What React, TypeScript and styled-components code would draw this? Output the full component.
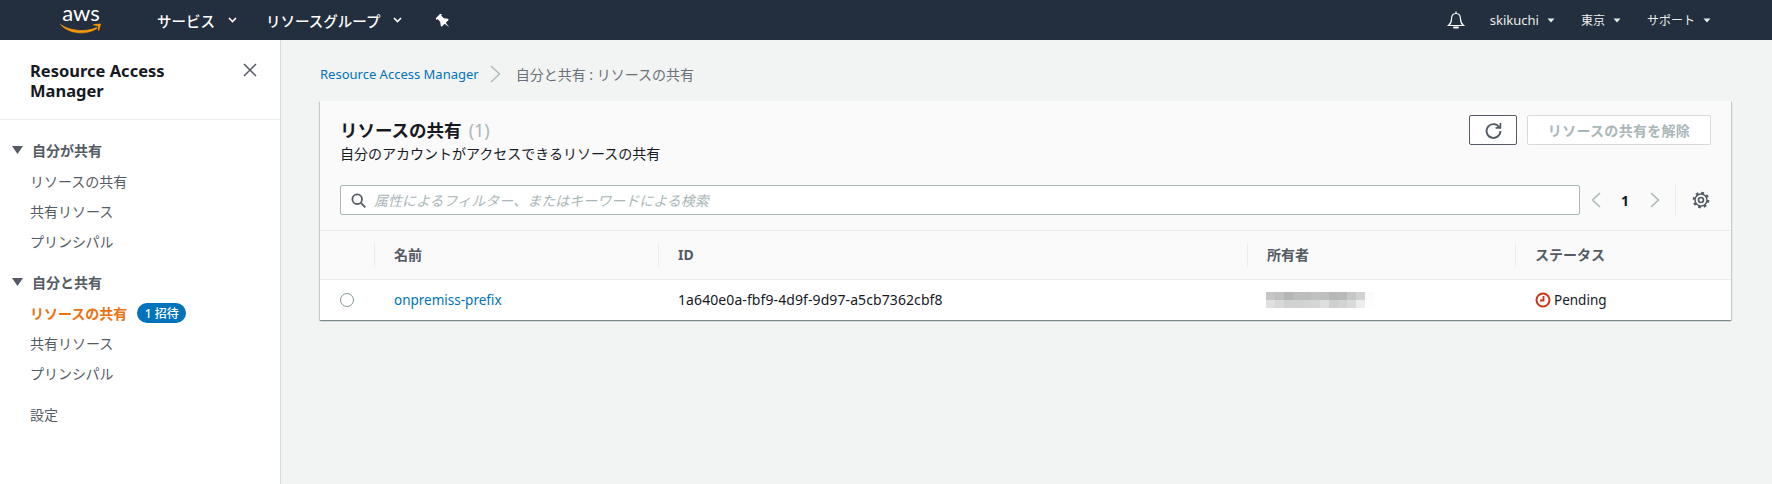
import React from "react";
import styled, { createGlobalStyle } from "styled-components";

const FONT = `"Noto Sans", "Noto Sans CJK JP", sans-serif`;

const Global = createGlobalStyle`
  html, body { margin: 0; padding: 0; background: #f2f3f3; height: 100%; }
  body { font-family: ${FONT}; font-size: 14px; color: #16191f; overflow: hidden; }
  * { box-sizing: border-box; }
`;

const Page = styled.div`
  width: 1772px;
  height: 484px;
  display: flex;
  flex-direction: column;
`;

const TopBar = styled.header`
  height: 40px;
  flex: none;
  background: #232f3e;
  color: #fff;
  display: flex;
  align-items: center;
  padding: 0 0 0 60px;
`;

const LogoBox = styled.div`
  width: 42px;
  height: 32px;
  display: flex;
  flex-direction: column;
  align-items: center;
  margin-right: 55px;
  margin-top: -2px;
`;

const LogoWord = styled.span`
  font-family: Lato, sans-serif;
  font-size: 22px;
  line-height: 19px;
  height: 19px;
  color: #fff;
`;

const NavMenu = styled.span<{ $right?: number }>`
  display: inline-flex;
  align-items: center;
  font-size: 14.5px;
  font-weight: 500;
  color: #fff;
  gap: 13px;
  margin-right: ${(p) => p.$right ?? 29}px;
  white-space: nowrap;
`;

const PinWrap = styled.span`
  display: flex;
  margin-top: 3px;
`;

const UserMenu = styled.span<{ $right?: number; $size?: number }>`
  display: inline-flex;
  align-items: center;
  font-size: ${(p) => p.$size ?? 12}px;
  color: #eaeded;
  gap: 8px;
  margin-right: ${(p) => p.$right ?? 0}px;
  white-space: nowrap;
`;

const Spacer = styled.div`
  flex: 1;
`;

const BellWrap = styled.span`
  display: flex;
  margin-right: 24px;
`;

const Body = styled.div`
  flex: 1;
  display: flex;
  min-height: 0;
`;

const Sidebar = styled.aside`
  width: 281px;
  flex: none;
  background: #fff;
  border-right: 1px solid #d5dbdb;
`;

const SideHead = styled.div`
  height: 80px;
  padding: 21px 22px 0 30px;
  border-bottom: 1px solid #eaeded;
  display: flex;
  justify-content: space-between;
  align-items: flex-start;
`;

const SideTitle = styled.div`
  font-size: 16.5px;
  font-weight: 700;
  line-height: 20px;
  width: 180px;
`;

const CloseBtn = styled.span`
  display: flex;
  margin-top: 1px;
  color: #545b64;
`;

const SideNav = styled.nav`
  padding-top: 14px;
`;

const SectionHead = styled.div`
  display: flex;
  align-items: center;
  height: 32px;
  padding-left: 12px;
  gap: 9px;
  font-weight: 700;
  font-size: 14px;
  color: #545b64;
`;

const NavGroup = styled.div`
  margin-bottom: 10px;
`;

const NavItem = styled.div<{ $active?: boolean }>`
  display: flex;
  align-items: center;
  height: 30px;
  padding-left: 30px;
  font-size: 14px;
  font-weight: ${(p) => (p.$active ? 700 : 400)};
  color: ${(p) => (p.$active ? "#ec7211" : "#545b64")};
`;

const Badge = styled.span`
  margin-left: 10px;
  height: 20px;
  width: 49px;
  border-radius: 10px;
  background: #0073bb;
  color: #fff;
  font-size: 12px;
  font-weight: 500;
  display: inline-flex;
  align-items: center;
  justify-content: center;
  gap: 4px;
`;

const SoloItem = styled(NavItem)`
  margin-top: 11px;
`;

const Main = styled.main`
  flex: 1;
  padding: 23px 41px 0 39px;
`;

const Crumbs = styled.div`
  display: flex;
  align-items: center;
  height: 22px;
  gap: 11px;
  margin-bottom: 16px;
  color: #687078;
`;

const CrumbLink = styled.a`
  font-size: 13px;
  color: #0073bb;
`;

const CrumbCurrent = styled.span`
  font-size: 14px;
  margin-left: 4px;
`;

const Card = styled.section`
  background: #fff;
  box-shadow: 0 1px 1px 0 rgba(0, 28, 36, 0.3), 1px 1px 1px 0 rgba(0, 28, 36, 0.15), -1px 1px 1px 0 rgba(0, 28, 36, 0.15);
`;

const CardTop = styled.div`
  background: #fafafa;
  height: 130px;
  padding: 14px 20px 0 20px;
  border-bottom: 1px solid #eaeded;
`;

const TitleRow = styled.div`
  display: flex;
  justify-content: space-between;
  align-items: flex-start;
  height: 70px;
`;

const TitleText = styled.div`
  padding-top: 2px;
`;

const CardTitle = styled.h2`
  margin: 0;
  font-size: 17.5px;
  line-height: 26px;
  font-weight: 700;
  color: #16191f;
`;

const Count = styled.span`
  font-weight: 400;
  font-size: 18px;
  color: #aab7b8;
  margin-left: 7px;
`;

const CardDesc = styled.div`
  font-size: 14px;
  line-height: 20px;
  color: #16191f;
  margin-top: 1px;
`;

const Actions = styled.div`
  display: flex;
  gap: 10px;
`;

const IconButton = styled.button`
  width: 48px;
  height: 30px;
  margin: 0;
  padding: 0;
  background: #fff;
  border: 1px solid #545b64;
  border-radius: 2px;
  color: #545b64;
  display: flex;
  align-items: center;
  justify-content: center;
`;

const DisabledButton = styled.button`
  width: 184px;
  height: 30px;
  padding: 0;
  background: #fff;
  border: 1px solid #d5dbdb;
  border-radius: 2px;
  color: #aab7b8;
  font-family: ${FONT};
  font-weight: 700;
  font-size: 14px;
  letter-spacing: 0.3px;
`;

const FilterRow = styled.div`
  display: flex;
  align-items: center;
`;

const SearchBox = styled.div`
  width: 1240px;
  height: 30px;
  background: #fff;
  border: 1px solid #aab7b8;
  border-radius: 2px;
  display: flex;
  align-items: center;
  padding-left: 10px;
  gap: 8px;
  color: #545b64;
`;

const Placeholder = styled.span`
  font-style: italic;
  font-size: 14px;
  color: #aab7b8;
`;

const Pager = styled.div`
  display: flex;
  align-items: center;
  margin-left: 10px;
  height: 30px;
`;

const PagerArrow = styled.span`
  display: flex;
  width: 11px;
  justify-content: center;
  color: #aab7b8;
`;

const PageNum = styled.span`
  font-size: 14px;
  font-weight: 700;
  width: 48px;
  text-align: center;
`;

const PagerDivider = styled.span`
  width: 1px;
  height: 30px;
  background: #eaeded;
  margin: 0 16px 0 15px;
`;

const GearWrap = styled.span`
  display: flex;
  color: #545b64;
`;

const Table = styled.div`
  display: grid;
  grid-template-columns: 54px 284px 589px 268px 1fr;
`;

const HeadCell = styled.div<{ $sep?: boolean }>`
  height: 49px;
  background: #fafafa;
  border-bottom: 1px solid #eaeded;
  display: flex;
  align-items: center;
  padding: 0 0 2px 20px;
  font-weight: 700;
  font-size: 14px;
  color: #545b64;
  position: relative;

  &::before {
    content: "";
    display: ${(p) => (p.$sep ? "block" : "none")};
    position: absolute;
    left: 0;
    top: 12px;
    height: 24px;
    width: 1px;
    background: #eaeded;
  }
`;

const Cell = styled.div`
  height: 40px;
  display: flex;
  align-items: center;
  padding-left: 20px;
  font-size: 14px;
  color: #16191f;
`;

const Radio = styled.span`
  width: 14px;
  height: 14px;
  border: 1px solid #879596;
  border-radius: 50%;
  background: #fff;
`;

const RowLink = styled.a`
  color: #0073bb;
  font-size: 13.5px;
`;

const IdText = styled.span`
  letter-spacing: 0.09px;
  margin-top: -1px;
`;

const Mosaic = styled.div`
  display: grid;
  grid-template-columns: repeat(12, 9px);
  grid-auto-rows: 8px;
  margin-left: -1px;
`;

const StatusWrap = styled.span`
  display: inline-flex;
  align-items: center;
  gap: 3px;
  font-size: 13.5px;
`;

const Caret = () => (
  <svg width="9" height="6" viewBox="0 0 9 6">
    <path d="M1 1l3.5 3.5L8 1" fill="none" stroke="currentColor" strokeWidth="1.6" />
  </svg>
);

const SmallCaret = () => (
  <svg width="8" height="5" viewBox="0 0 8 5">
    <path d="M0.5 0.5h7L4 4.5z" fill="currentColor" />
  </svg>
);

const Triangle = () => (
  <svg width="11" height="8" viewBox="0 0 11 8">
    <path d="M0 0h11L5.5 8z" fill="#545b64" />
  </svg>
);

const shades = [
  "#c4c6c6", "#bfc1c1", "#b4b6b6", "#bbbdbd", "#bbbdbd", "#bfc1c1", "#bdbfbf", "#b6b8b8", "#b8baba", "#c6c8c8", "#d0d2d2", "#fbfbfb",
  "#e0e0e0", "#d8d8d8", "#cfd1d1", "#d0d2d2", "#d2d4d4", "#d4d6d6", "#dedede", "#cdcfcf", "#d2d4d4", "#d8dada", "#ececec", "#fdfdfd",
];

export default function App() {
  return (
    <Page>
      <Global />
      <TopBar>
        <LogoBox>
          <LogoWord>aws</LogoWord>
          <svg width="42" height="13" viewBox="0 0 42 13">
            <path d="M0.5 2.500C9 8.500 25 11 36.500 5.500L37 6.500C26 13.500 9 12 0.500 2.500z" fill="#f90" stroke="#f90" strokeWidth="0.6" strokeLinejoin="round" />
            <path d="M33.500 2.800l7-.8-1.800 6.500-.6-4.700z" fill="#f90" stroke="#f90" strokeWidth="0.8" strokeLinejoin="round" />
          </svg>
        </LogoBox>
        <NavMenu>サービス <Caret /></NavMenu>
        <NavMenu $right={34}>リソースグループ <Caret /></NavMenu>
        <PinWrap>
          <svg width="16" height="16" viewBox="-8 -8 16 16">
            <g transform="rotate(-45) translate(0 -1)">
              <path d="M-3.800 -7.500H3.800V-5.700H2.600V-1.800L5 1.500V2.700H0.800L0 8.500-0.800 2.700H-5V1.500L-2.600 -1.800V-5.700H-3.800z" fill="#fff" />
            </g>
          </svg>
        </PinWrap>
        <Spacer />
        <BellWrap>
          <svg width="20" height="20" viewBox="0 0 20 20" fill="none" stroke="#fff" strokeWidth="1.2">
            <path d="M2.500 15.500c2-1.500 3-3 3-6.500 0-3.500 2-5.500 4.500-5.500s4.500 2 4.500 5.500c0 3.500 1 5 3 6.500z" />
            <path d="M10 1.500v2" />
            <path d="M8 17.500h4" strokeWidth="1.800" strokeLinecap="round" />
          </svg>
        </BellWrap>
        <UserMenu $right={26} $size={13}>skikuchi <SmallCaret /></UserMenu>
        <UserMenu $right={26}>東京 <SmallCaret /></UserMenu>
        <UserMenu $right={61}>サポート <SmallCaret /></UserMenu>
      </TopBar>
      <Body>
        <Sidebar>
          <SideHead>
            <SideTitle>Resource Access Manager</SideTitle>
            <CloseBtn>
              <svg width="16" height="16" viewBox="0 0 16 16">
                <path d="M2 2l12 12M14 2L2 14" stroke="currentColor" strokeWidth="1.500" fill="none" />
              </svg>
            </CloseBtn>
          </SideHead>
          <SideNav>
            <NavGroup>
              <SectionHead><Triangle />自分が共有</SectionHead>
              <NavItem>リソースの共有</NavItem>
              <NavItem>共有リソース</NavItem>
              <NavItem>プリンシパル</NavItem>
            </NavGroup>
            <NavGroup>
              <SectionHead><Triangle />自分と共有</SectionHead>
              <NavItem $active>リソースの共有<Badge>1 招待</Badge></NavItem>
              <NavItem>共有リソース</NavItem>
              <NavItem>プリンシパル</NavItem>
            </NavGroup>
            <SoloItem>設定</SoloItem>
          </SideNav>
        </Sidebar>
        <Main>
          <Crumbs>
            <CrumbLink>Resource Access Manager</CrumbLink>
            <svg width="11" height="18" viewBox="0 0 11 18">
              <path d="M1 1l8.500 8L1 17" fill="none" stroke="#aab7b8" strokeWidth="1.300" />
            </svg>
            <CrumbCurrent>自分と共有 : リソースの共有</CrumbCurrent>
          </Crumbs>
          <Card>
            <CardTop>
              <TitleRow>
                <TitleText>
                  <CardTitle>リソースの共有<Count>(1)</Count></CardTitle>
                  <CardDesc>自分のアカウントがアクセスできるリソースの共有</CardDesc>
                </TitleText>
                <Actions>
                  <IconButton aria-label="refresh">
                    <svg width="17" height="17" viewBox="0 0 16 16" fill="none" stroke="currentColor" strokeWidth="1.800">
                      <path d="M13.500 5A6.500 6.500 0 1 0 14.500 8.500" />
                      <path d="M14.500 1v4.500H10" strokeWidth="1.600" />
                    </svg>
                  </IconButton>
                  <DisabledButton disabled>リソースの共有を解除</DisabledButton>
                </Actions>
              </TitleRow>
              <FilterRow>
                <SearchBox>
                  <svg width="15" height="15" viewBox="0 0 15 15" fill="none" stroke="currentColor" strokeWidth="1.800">
                    <circle cx="6.200" cy="6.200" r="4.800" />
                    <path d="M9.800 9.800l4.500 4.500" />
                  </svg>
                  <Placeholder>属性によるフィルター、またはキーワードによる検索</Placeholder>
                </SearchBox>
                <Pager>
                  <PagerArrow>
                    <svg width="10" height="16" viewBox="0 0 10 16"><path d="M9 1L1.500 8 9 15" fill="none" stroke="currentColor" strokeWidth="1.500" /></svg>
                  </PagerArrow>
                  <PageNum>1</PageNum>
                  <PagerArrow>
                    <svg width="10" height="16" viewBox="0 0 10 16"><path d="M1 1l7.500 7L1 15" fill="none" stroke="currentColor" strokeWidth="1.500" /></svg>
                  </PagerArrow>
                  <PagerDivider />
                  <GearWrap>
                    <svg width="18" height="18" viewBox="0 0 16 16" fill="none" stroke="currentColor">
                      <circle cx="8" cy="8" r="2.200" strokeWidth="1.500" />
                      <circle cx="8" cy="8" r="6.400" strokeWidth="2" strokeDasharray="2.400 2.630" />
                      <circle cx="8" cy="8" r="5.300" strokeWidth="1.300" />
                    </svg>
                  </GearWrap>
                </Pager>
              </FilterRow>
            </CardTop>
            <Table>
              <HeadCell />
              <HeadCell $sep>名前</HeadCell>
              <HeadCell $sep>ID</HeadCell>
              <HeadCell $sep>所有者</HeadCell>
              <HeadCell $sep>ステータス</HeadCell>
              <Cell><Radio /></Cell>
              <Cell><RowLink>onpremiss-prefix</RowLink></Cell>
              <Cell><IdText>1a640e0a-fbf9-4d9f-9d97-a5cb7362cbf8</IdText></Cell>
              <Cell>
                <Mosaic aria-hidden>
                  {shades.map((c, i) => (
                    <span key={i} style={{ background: c }} />
                  ))}
                </Mosaic>
              </Cell>
              <Cell>
                <StatusWrap>
                  <svg width="16" height="16" viewBox="0 0 16 16" fill="none" stroke="#d13212">
                    <circle cx="8" cy="8" r="6.500" strokeWidth="2" />
                    <path d="M8.500 4v4.500H5" strokeWidth="1.800" />
                  </svg>
                  Pending
                </StatusWrap>
              </Cell>
            </Table>
          </Card>
        </Main>
      </Body>
    </Page>
  );
}
